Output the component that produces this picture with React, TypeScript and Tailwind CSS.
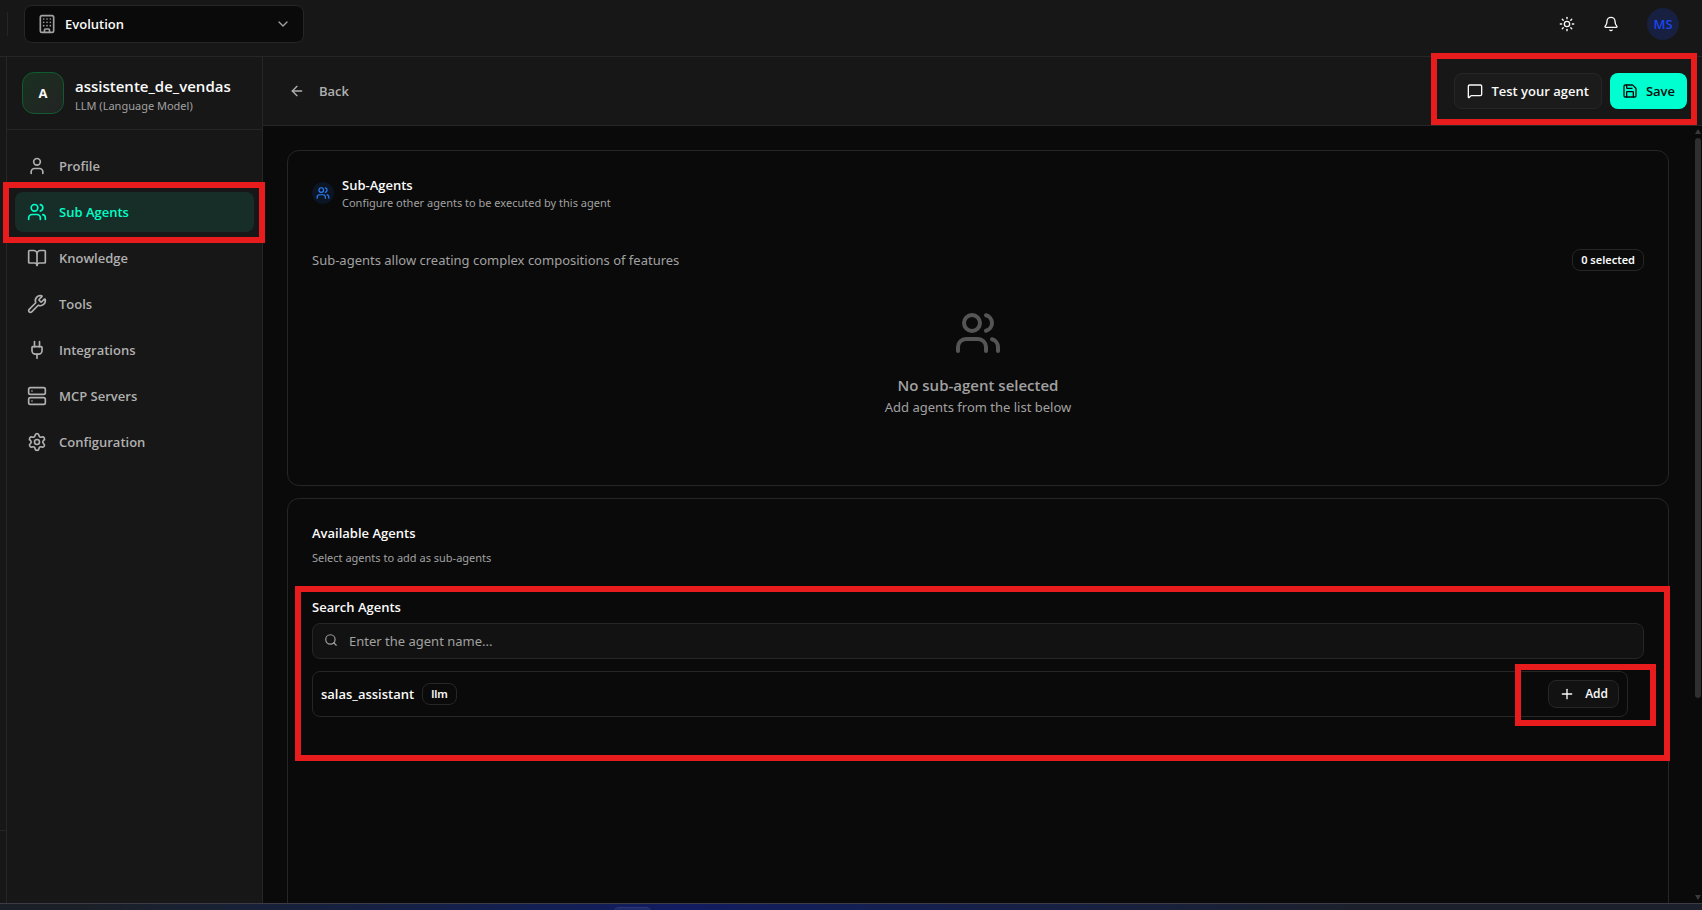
import { useState } from "react";
import {
  ArrowLeft,
  Bell,
  BookOpen,
  Building,
  ChevronDown,
  MessageSquare,
  Plug,
  Plus,
  Save,
  Search,
  Server,
  Settings,
  Sun,
  User,
  Users,
  Wrench,
  type LucideIcon,
} from "lucide-react";

type NavItem = { label: string; icon: LucideIcon };

const NAV: NavItem[] = [
  { label: "Profile", icon: User },
  { label: "Sub Agents", icon: Users },
  { label: "Knowledge", icon: BookOpen },
  { label: "Tools", icon: Wrench },
  { label: "Integrations", icon: Plug },
  { label: "MCP Servers", icon: Server },
  { label: "Configuration", icon: Settings },
];

const AGENTS = [{ name: "salas_assistant", type: "llm" }];

export default function App() {
  return (
    <div className="flex h-screen flex-col overflow-hidden bg-[#0a0a0a] font-['Open_Sans','Noto_Sans',sans-serif] text-[13px] leading-5 text-neutral-50">
      <Topbar />
      <div className="flex min-h-0 flex-1">
        <Rail />
        <Sidebar />
        <div className="flex min-w-0 flex-1 flex-col">
          <PageHeader />
          <div className="flex min-h-0 flex-1">
            <main className="flex min-w-0 flex-1 flex-col gap-3 overflow-hidden p-6">
              <SelectedCard />
              <AvailableCard />
            </main>
            <Scrollbar />
          </div>
        </div>
      </div>
      <Taskbar />
    </div>
  );
}

function Topbar() {
  return (
    <header className="flex h-[57px] shrink-0 items-start justify-between border-b border-[#262626] bg-[#171717] pr-[23px] pl-[7px]">
      <div className="flex items-start">
        <div className="mt-3 h-6 w-px bg-[#262626]" />
        <div className="relative mt-[5px] ml-4 w-[280px]">
          <Building className="pointer-events-none absolute top-[9px] left-[13px] size-5 text-neutral-400" />
          <select
            aria-label="Workspace"
            className="h-[38px] w-full appearance-none rounded-lg border border-[#262626] bg-[#0a0a0a] pr-10 pl-10 font-semibold"
          >
            <option>Evolution</option>
          </select>
          <ChevronDown className="pointer-events-none absolute top-[11px] right-[13px] size-4 text-neutral-400" />
        </div>
      </div>
      <div className="flex items-center pt-2">
        <button aria-label="Toggle theme" className="grid size-8 place-items-center">
          <Sun className="size-4" />
        </button>
        <button aria-label="Notifications" className="ml-3 grid size-8 place-items-center">
          <Bell className="size-4" />
        </button>
        <button className="ml-5 size-8 rounded-full bg-[#172040] font-semibold text-[#1b45f0]">
          MS
        </button>
      </div>
    </header>
  );
}

// Edge of the collapsed app menu
function Rail() {
  return (
    <div className="flex w-[7px] shrink-0 flex-col justify-end border-r border-[#262626] bg-[#171717]">
      <div className="h-[73px] border-t border-[#262626]" />
    </div>
  );
}

function Sidebar() {
  const [active, setActive] = useState("Sub Agents");

  return (
    <aside className="z-10 flex w-64 shrink-0 flex-col border-r border-[#262626] bg-[#171717]">
      <div className="flex h-[73px] shrink-0 gap-[11px] border-b border-[#262626] p-[15px]">
        <div className="grid size-[42px] place-items-center rounded-xl border border-[#0f5c30] bg-linear-to-br from-[#18301f] to-[#232324] font-bold">
          A
        </div>
        <div className="flex flex-col gap-[2px] pt-1">
          <h1 className="text-[15px] leading-5 font-semibold">assistente_de_vendas</h1>
          <p className="font-['Noto_Sans',sans-serif] text-[11px] leading-4 text-neutral-400">
            LLM (Language Model)
          </p>
        </div>
      </div>
      <nav className="flex flex-col gap-[6px] px-2 py-4">
        {NAV.map(({ label, icon: Icon }) => (
          <div key={label} className="relative">
            <button
              onClick={() => setActive(label)}
              className={
                "flex h-10 w-full items-center gap-3 rounded-lg px-3 font-semibold " +
                (label === active ? "bg-[#162d28] text-[#00ffc8]" : "text-[#b0b0b0]")
              }
            >
              <Icon className="size-5" />
              {label}
            </button>
            {label === "Sub Agents" && (
              <Highlight className="-top-[10px] -right-[11px] -bottom-[11px] -left-3" />
            )}
          </div>
        ))}
      </nav>
    </aside>
  );
}

function PageHeader() {
  return (
    <div className="flex h-[69px] shrink-0 items-center justify-between border-b border-[#262626] bg-[#171717] pr-[15px] pl-[26px]">
      <button className="flex items-center gap-[14px] font-semibold text-[#b0b0b0]">
        <ArrowLeft className="size-4" />
        Back
      </button>
      <div className="relative flex gap-2">
        <button className="flex h-9 items-center gap-2 rounded-lg border border-[#262626] bg-[#1b1b1b] px-3 font-semibold">
          <MessageSquare className="size-4" />
          Test your agent
        </button>
        <button className="flex h-9 items-center gap-2 rounded-lg bg-[#00ffd0] px-3 font-semibold text-neutral-950">
          <Save className="size-4" />
          Save
        </button>
        <Highlight className="-top-5 -right-[10px] -bottom-4 -left-[23px]" />
      </div>
    </div>
  );
}

function SelectedCard() {
  return (
    <section className="shrink-0 rounded-xl border border-[#262626] p-6">
      <div className="flex items-center gap-2">
        <div className="grid size-[22px] place-items-center rounded-full bg-[#0b1524] text-blue-500">
          <Users className="size-[14px]" />
        </div>
        <div>
          <h2 className="leading-5 font-semibold">Sub-Agents</h2>
          <p className="font-['Noto_Sans',sans-serif] text-[11px] leading-4 text-neutral-400">
            Configure other agents to be executed by this agent
          </p>
        </div>
      </div>
      <div className="mt-[38px] flex items-center justify-between">
        <p className="font-['Noto_Sans',sans-serif] text-neutral-400">
          Sub-agents allow creating complex compositions of features
        </p>
        <Badge>0 selected</Badge>
      </div>
      <div className="mt-[38px] flex flex-col items-center pb-11 text-neutral-400">
        <Users className="size-12 text-[#555555]" />
        <p className="mt-4 text-[15px] leading-6 font-semibold">No sub-agent selected</p>
        <p className="font-['Noto_Sans',sans-serif]">Add agents from the list below</p>
      </div>
    </section>
  );
}

function AvailableCard() {
  const [query, setQuery] = useState("");
  const agents = AGENTS.filter((a) => a.name.includes(query.toLowerCase()));

  return (
    <section className="min-h-[600px] shrink-0 rounded-xl border border-[#262626] p-6">
      <h2 className="font-semibold">Available Agents</h2>
      <p className="mt-[7px] font-['Noto_Sans',sans-serif] text-[11px] leading-4 text-neutral-400">
        Select agents to add as sub-agents
      </p>
      <div className="relative mt-[31px] pb-[31px]">
        <label htmlFor="agent-search" className="block font-semibold">
          Search Agents
        </label>
        <div className="relative mt-[6px]">
          <Search className="pointer-events-none absolute top-[10px] left-3 size-[14px] text-neutral-400" />
          <input
            id="agent-search"
            type="text"
            value={query}
            onChange={(e) => setQuery(e.target.value)}
            placeholder="Enter the agent name..."
            className="h-9 w-full rounded-lg border border-[#262626] bg-[#121212] pr-3 pl-9 font-['Noto_Sans',sans-serif] outline-none placeholder:text-neutral-400"
          />
        </div>
        <ul className="mt-3 flex flex-col gap-2 pr-4">
          {agents.map((agent) => (
            <li
              key={agent.name}
              className="flex items-center justify-between rounded-lg border border-[#262626] p-2"
            >
              <div className="flex items-center gap-2">
                <span className="font-semibold">{agent.name}</span>
                <Badge>{agent.type}</Badge>
              </div>
              <div className="relative">
                <button className="flex h-7 items-center gap-[10px] rounded-lg border border-[#262626] bg-[#121212] px-[10px] text-xs font-semibold">
                  <Plus className="size-4" />
                  Add
                </button>
                <Highlight className="-top-4 -right-[37px] -bottom-[18px] -left-[33px]" />
              </div>
            </li>
          ))}
        </ul>
        <Highlight className="-top-[11px] -right-[26px] -bottom-[13px] -left-[17px]" />
      </div>
    </section>
  );
}

function Badge({ children }: { children: string }) {
  return (
    <span className="rounded-lg border border-[#262626] px-2 py-[2px] font-['Noto_Sans',sans-serif] text-[11px] leading-4 font-semibold">
      {children}
    </span>
  );
}

function Highlight({ className }: { className: string }) {
  return (
    <div
      aria-hidden
      className={"pointer-events-none absolute border-[6px] border-[#e81c1c] " + className}
    />
  );
}

function Scrollbar() {
  return (
    <div aria-hidden className="flex w-[9px] shrink-0 flex-col items-center pt-[3px] pb-[3px]">
      <svg viewBox="0 0 6 5" className="h-[5px] w-[6px] fill-[#3a3a3a]">
        <path d="M3 0 6 5H0z" />
      </svg>
      <div className="mt-1 h-[560px] w-[6px] rounded-full bg-[#2f2f2f]" />
      <svg viewBox="0 0 6 5" className="mt-auto h-[5px] w-[6px] fill-[#3a3a3a]">
        <path d="M0 0h6L3 5z" />
      </svg>
    </div>
  );
}

// Thin slice of the system bar with the top edge of one open window tab
function Taskbar() {
  return (
    <footer className="h-[7px] shrink-0 overflow-hidden border-t border-[#3c3d44] bg-linear-to-r from-[#1b2028] from-5% via-[#121c60] via-40% to-[#1c202c] to-80%">
      <div className="mt-[3px] ml-[36%] h-2 w-[39px] rounded-t-md border border-[#2b3778] bg-[#1f2a66]" />
    </footer>
  );
}
